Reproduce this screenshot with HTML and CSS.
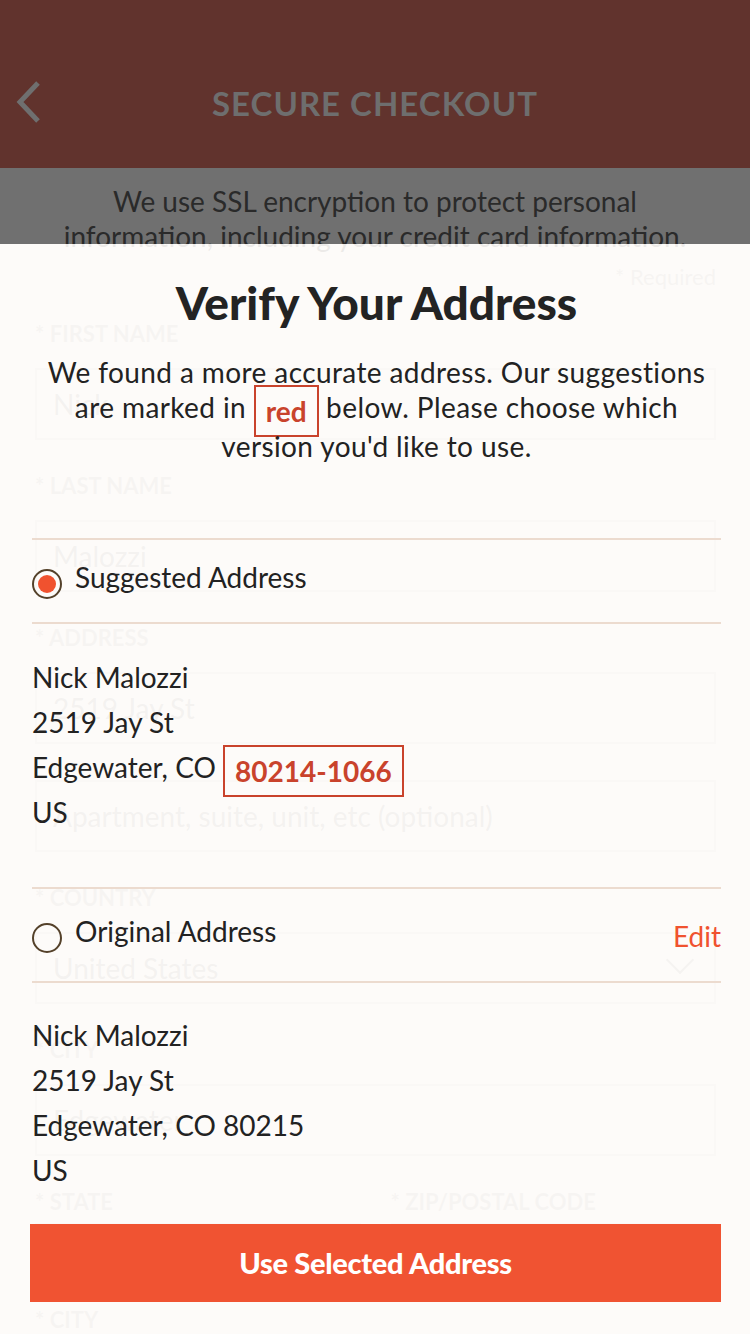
FILE: index.html
```html
<!DOCTYPE html>
<html>
<head>
<meta charset="utf-8">
<link rel="stylesheet" href="styles.css">
</head>
<body>
<div class="page">
  <header class="topbar">
    <svg class="back" width="28" height="44" viewBox="0 0 28 44"><path d="M24 3 L6 22 L24 41" fill="none" stroke="#6f6f6f" stroke-width="5"/></svg>
    <h1 class="topbar-title">SECURE CHECKOUT</h1>
  </header>
  <div class="ssl">
    <p>We use SSL encryption to protect personal information, including your credit card information.</p>
  </div>
  <form class="form">
    <div class="required">* Required</div>
    <div class="field first"><div class="label">* FIRST NAME</div><div class="input">Nick</div></div>
    <div class="field"><div class="label">* LAST NAME</div><div class="input">Malozzi</div></div>
    <div class="field"><div class="label">* ADDRESS</div><div class="input">2519 Jay St</div><div class="input">Apartment, suite, unit, etc (optional)</div></div>
    <div class="field"><div class="label">* COUNTRY</div><div class="input select">United States<span class="chev"></span></div></div>
    <div class="field"><div class="label">* CITY</div><div class="input">Edgewater</div></div>
    <div class="field two">
      <div><div class="label">* STATE</div><div class="input short"></div></div>
      <div><div class="label">* ZIP/POSTAL CODE</div><div class="input short"></div></div>
    </div>
    <div class="field last"><div class="label">* CITY</div></div>
  </form>
</div>

<div class="modal">
  <h2 class="modal-title">Verify Your Address</h2>
  <p class="modal-intro">We found a more accurate address. Our suggestions are marked in <span class="mark">red</span> below. Please choose which version you'd like to use.</p>

  <div class="option">
    <span class="radio checked"></span>
    <span class="option-name">Suggested Address</span>
  </div>
  <div class="address">
    <div>Nick Malozzi</div>
    <div>2519 Jay St</div>
    <div>Edgewater, CO <span class="mark">80214-1066</span></div>
    <div>US</div>
  </div>

  <div class="option original">
    <span class="radio"></span>
    <span class="option-name">Original Address</span>
    <span class="edit">Edit</span>
  </div>
  <div class="address second">
    <div>Nick Malozzi</div>
    <div>2519 Jay St</div>
    <div>Edgewater, CO 80215</div>
    <div>US</div>
  </div>

  <button class="use-btn" type="button">Use Selected Address</button>
</div>
</body>
</html>
```

FILE: styles.css
```css
* { box-sizing: border-box; }
html, body { margin: 0; padding: 0; }
body {
  width: 750px;
  height: 1334px;
  overflow: hidden;
  position: relative;
  background: #fdfbf8;
  font-family: "Lato", "Noto Sans", sans-serif;
  color: #222;
}
.page { width: 750px; }
.topbar {
  height: 168px;
  background: #61332d;
  display: flex;
  align-items: center;
  justify-content: center;
  position: relative;
}
.back { position: absolute; left: 14px; top: 80px; }
.topbar-title {
  margin: 0;
  padding-top: 38px;
  font-size: 33px;
  font-weight: 700;
  letter-spacing: 1px;
  color: #6e6e6e;
}
.ssl {
  height: 76px;
  background: #707070;
  padding: 16px 40px 0;
}
.ssl p {
  margin: 0;
  font-size: 28px;
  line-height: 35px;
  text-align: center;
  color: #2a2a2a;
}
.form { padding: 18px 34px 0 35px; color: #666; }
.required { text-align: right; font-size: 22px; color: #a5a5a5; line-height: 30px; }
.label { font-size: 22px; font-weight: 700; color: #aaa; line-height: 30px; margin-top: 31px; }
.first .label { margin-top: 27px; }
.last .label { margin-top: 10px; }
.input {
  height: 72px;
  border: 2px solid #d0d0d0;
  margin-top: 19px;
  padding: 0 16px;
  display: flex;
  align-items: center;
  font-size: 28px;
  color: #8a8a8a;
  background: #fff;
  position: relative;
}
.input.short { margin-top: 6px; }
.field .input + .input { margin-top: 36px; }
.chev { position: absolute; right: 24px; top: 16px; width: 20px; height: 20px; border-right: 2px solid #999; border-bottom: 2px solid #999; transform: rotate(45deg); }
.two { display: grid; grid-template-columns: 1fr 1fr; gap: 30px; }

.modal {
  position: absolute;
  top: 244px;
  left: 0;
  width: 750px;
  height: 1090px;
  background: rgba(253, 251, 248, 0.92);
  padding: 29px 29px 0 32px;
}
.modal-title {
  margin: 0;
  text-align: center;
  font-size: 46px;
  line-height: 60px;
  font-weight: 900;
  color: #232323;
}
.modal-intro {
  margin: 22px 0 0;
  padding: 0 12px;
  text-align: center;
  font-size: 28px;
  letter-spacing: 0.4px;
  line-height: 35px;
  color: #222;
}
.mark {
  display: inline-block;
  border: 2px solid #c9432c;
  color: #c9432c;
  font-weight: 700;
  padding: 0 10px;
  line-height: 48px;
  vertical-align: middle;
  margin-top: -8px;
  margin-bottom: -8px;
  letter-spacing: 0;
}
.option {
  margin-top: 74px;
  height: 86px;
  border-top: 2px solid #ecdbcf;
  border-bottom: 2px solid #ecdbcf;
  display: flex;
  align-items: center;
  gap: 13px;
  font-size: 28px;
}
.radio {
  width: 30px;
  height: 30px;
  border-radius: 50%;
  border: 2px solid #54412a;
  margin-top: 6px;
  flex: none;
  position: relative;
}
.radio.checked::after {
  content: "";
  position: absolute;
  left: 4px; top: 4px;
  width: 18px; height: 18px;
  border-radius: 50%;
  background: #f0522f;
}
.option-name { flex: 1; padding-bottom: 8px; }
.edit { color: #f0522f; font-size: 28px; padding-top: 2px; }
.address {
  margin-top: 31px;
  font-size: 28px;
  line-height: 45px;
}
.original { margin-top: 52px; height: 96px; }
.address.second { margin-top: 30px; }
.use-btn {
  display: block;
  margin-top: 31px;
  width: 691px;
  margin-left: -2px;
  height: 78px;
  border: none;
  background: #f05332;
  color: #fff;
  font-family: "Lato", "Noto Sans", sans-serif;
  font-size: 29px;
  font-weight: 900;
  letter-spacing: -0.3px;
}
```
